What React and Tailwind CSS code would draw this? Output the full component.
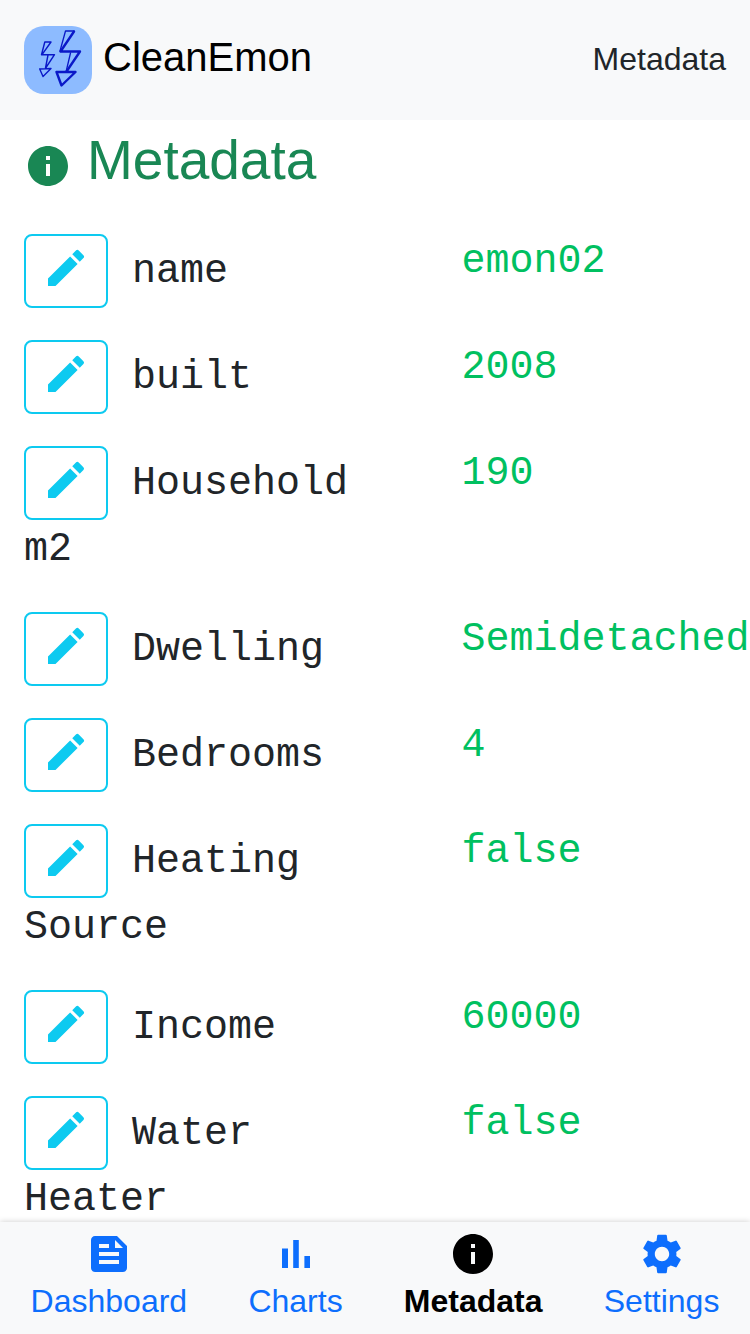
import React from "react";
import { MdEdit, MdFeed, MdInfo, MdSettings } from "react-icons/md";

const entries = [
  ["name", "emon02"],
  ["built", "2008"],
  ["Household m2", "190"],
  ["Dwelling", "Semidetached"],
  ["Bedrooms", "4"],
  ["Heating Source", "false"],
  ["Income", "60000"],
  ["Water Heater", "false"],
];

function Logo() {
  return (
    <svg viewBox="0 0 68 68" className="size-[68px] shrink-0" aria-hidden="true">
      <rect width="68" height="68" rx="20" fill="#8dbbff" />
      <g fill="none" stroke="#0a18c8" strokeLinejoin="round" strokeLinecap="round">
        <path strokeWidth="1.3" d="M36 25 41.5 5H50M46.5 27 42 46" />
        <path strokeWidth="2.4" d="M50 5.5 36.5 25.5H56L42.5 45.5M32.5 46H51.5L37.5 59.5Z" />
        <path strokeWidth="1.4" d="M17.5 28.7 20.8 16H27L18 28.7H30.5L22 41.5M24 29 21.5 42M15.7 43 27 42.5 19 50.5Z" />
      </g>
    </svg>
  );
}

function ChartIcon() {
  return (
    <svg viewBox="0 0 24 24" fill="currentColor" className="size-12" aria-hidden="true">
      <path d="M5 9.2h3V19H5zM10.6 5h2.8v14h-2.8zm5.6 8H19v6h-2.8z" />
    </svg>
  );
}

function NavItem({ label, active, children }) {
  return (
    <a
      href={"#" + label.toLowerCase()}
      aria-current={active ? "page" : undefined}
      className={
        active
          ? "flex flex-col items-center font-bold text-black"
          : "flex flex-col items-center text-[#0d6efd]"
      }
    >
      {children}
      <span className="text-[32px] leading-[46px]">{label}</span>
    </a>
  );
}

export default function App() {
  return (
    <div className="flex h-dvh flex-col bg-white font-['Liberation_Sans',Arial,sans-serif] text-[#212529]">
      <header className="flex h-[120px] shrink-0 items-center justify-between bg-[#f8f9fa] px-6">
        <a href="#home" className="flex items-center gap-[11px] text-black">
          <Logo />
          <span className="pb-1.5 text-[40px] leading-[60px]">CleanEmon</span>
        </a>
        <span className="pb-0.5 text-[32px] leading-[48px]">Metadata</span>
      </header>

      <main className="min-h-0 flex-1 overflow-x-hidden overflow-y-auto pt-2 [scrollbar-width:none]">
        <h1 className="flex items-end gap-[15px] px-6 pb-[26px] text-[55px] leading-[64px] text-[#198754]">
          <MdInfo className="mb-0.5 size-12" aria-hidden="true" />
          Metadata
        </h1>
        <dl className="font-['Liberation_Mono',monospace] text-[40px]">
          {entries.map(([label, value]) => (
            <div key={label} className="flex py-4">
              <dt className="w-7/12 shrink-0 px-6 leading-[60px]">
                <button
                  type="button"
                  aria-label={"Edit " + label}
                  className="inline-flex h-[74px] w-[84px] justify-center rounded-lg border-2 border-[#0dcaf0] pt-2 align-middle text-[#0dcaf0]"
                >
                  <MdEdit className="size-12" aria-hidden="true" />
                </button>{" "}
                {label}
              </dt>
              <dd className="w-5/12 pl-6 leading-[56px] text-[#00c060]">{value}</dd>
            </div>
          ))}
        </dl>
      </main>

      <nav className="z-10 flex shrink-0 justify-around bg-[#f8f9fa] pt-2 pb-2.5 shadow-[0_0_6px_rgba(0,0,0,0.2)]">
        <NavItem label="Dashboard">
          <MdFeed className="size-12" aria-hidden="true" />
        </NavItem>
        <NavItem label="Charts">
          <ChartIcon />
        </NavItem>
        <NavItem label="Metadata" active>
          <MdInfo className="size-12" aria-hidden="true" />
        </NavItem>
        <NavItem label="Settings">
          <MdSettings className="size-12" aria-hidden="true" />
        </NavItem>
      </nav>
    </div>
  );
}
